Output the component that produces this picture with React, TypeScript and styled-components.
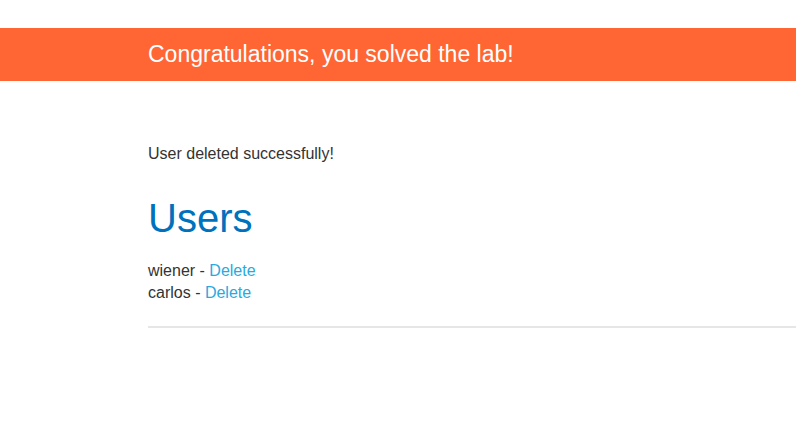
import React from "react";
import styled, { createGlobalStyle } from "styled-components";

const Global = createGlobalStyle`
  html, body { margin: 0; padding: 0; background: #fff; }
  body { font-family: "Liberation Sans", Arial, sans-serif; color: #333332; font-size: 16px; }
`;

const Page = styled.div`
  padding-top: 28px;
`;

const Banner = styled.div`
  background: #ff6633;
  height: 53px;
  display: flex;
  align-items: center;
  padding-left: 148px;
`;

const BannerText = styled.h4`
  margin: 0;
  color: #fff;
  font-size: 23px;
  font-weight: normal;
  line-height: 1;
`;

const Content = styled.div`
  padding: 62px 0 0 148px;
`;

const Message = styled.p`
  margin: 0;
  line-height: 22px;
`;

const Heading = styled.h1`
  margin: 29px 0 0;
  font-size: 40px;
  font-weight: normal;
  color: #0071bc;
  line-height: 48px;
`;

const UserList = styled.div`
  margin-top: 18px;
  line-height: 22px;
`;

const Row = styled.div``;

const Link = styled.a`
  color: #29a9e0;
  text-decoration: none;
`;

const Rule = styled.hr`
  margin: 22px 0 0;
  border: none;
  height: 2px;
  background: #e6e6e6;
`;

export default function App() {
  return (
    <>
      <Global />
      <Page>
        <Banner>
          <BannerText>Congratulations, you solved the lab!</BannerText>
        </Banner>
        <Content>
          <Message>User deleted successfully!</Message>
          <Heading>Users</Heading>
          <UserList>
            <Row>wiener - <Link href="#">Delete</Link></Row>
            <Row>carlos - <Link href="#">Delete</Link></Row>
          </UserList>
          <Rule />
        </Content>
      </Page>
    </>
  );
}
